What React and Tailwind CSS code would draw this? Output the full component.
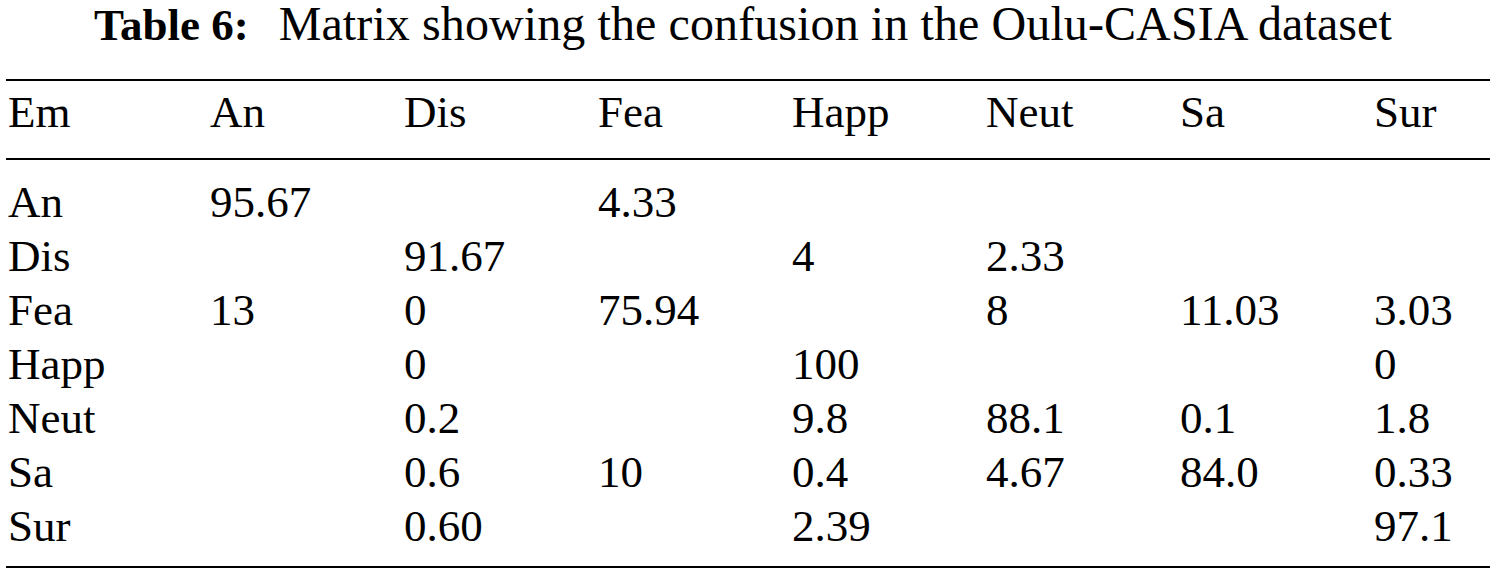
const header = ["Em", "An", "Dis", "Fea", "Happ", "Neut", "Sa", "Sur"];

const rows = [
  ["An", "95.67", "", "4.33", "", "", "", ""],
  ["Dis", "", "91.67", "", "4", "2.33", "", ""],
  ["Fea", "13", "0", "75.94", "", "8", "11.03", "3.03"],
  ["Happ", "", "0", "", "100", "", "", "0"],
  ["Neut", "", "0.2", "", "9.8", "88.1", "0.1", "1.8"],
  ["Sa", "", "0.6", "10", "0.4", "4.67", "84.0", "0.33"],
  ["Sur", "", "0.60", "", "2.39", "", "", "97.1"],
];

function Row({ cells }) {
  return (
    <div className="grid grid-cols-[202px_repeat(6,194px)_1fr] pl-[2px] h-[54px] leading-[54px]">
      {cells.map((c, i) => (
        <div key={i} className="whitespace-nowrap">
          {c}
        </div>
      ))}
    </div>
  );
}

export default function App() {
  return (
    <div className="w-[1496px] h-[571px] bg-white text-black text-[45px] overflow-hidden font-['Liberation_Serif','Tinos','Times_New_Roman','DejaVu_Serif',serif]">
      {/* Caption */}
      <div className="h-[48px] leading-[48px] flex justify-center items-baseline pr-[10px] whitespace-nowrap">
        <span className="font-bold text-[45px]">Table 6:</span>
        <span className="ml-[30px] text-[48px] tracking-[0.1px]">Matrix showing the confusion in the Oulu-CASIA dataset</span>
      </div>

      {/* Table */}
      <div className="mt-[31px] mx-[6px] border-t-2 border-b-2 border-black">
        <div className="pt-[4px] pb-[19px] border-b-2 border-black">
          <Row cells={header} />
        </div>
        <div className="pt-[15px] pb-[13px]">
          {rows.map((r, i) => (
            <Row key={i} cells={r} />
          ))}
        </div>
      </div>
    </div>
  );
}
